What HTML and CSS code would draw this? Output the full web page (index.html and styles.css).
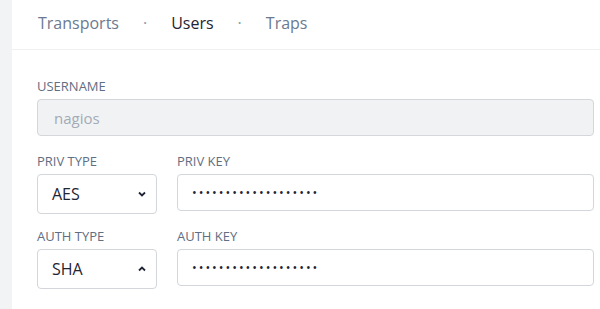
FILE: index.html
```html
<!DOCTYPE html>
<html lang="en">
<head>
    <meta charset="UTF-8">
    <meta name="viewport" content="width=device-width, initial-scale=1.0">
    <title>SNMP Users</title>
    <link rel="stylesheet" href="styles.css">
</head>
<body>
    <div class="layout">
        <div class="sidebar"></div>
        <div class="main">
            <nav class="tabs">
                <a class="tab">Transports</a>
                <span class="sep">·</span>
                <a class="tab active">Users</a>
                <span class="sep">·</span>
                <a class="tab">Traps</a>
            </nav>

            <form class="form">
                <div class="field username">
                    <label>Username</label>
                    <input type="text" class="input" value="nagios" disabled>
                </div>
                <div class="row">
                    <div class="field type">
                        <label>Priv Type</label>
                        <div class="select">
                            <span>AES</span>
                            <svg width="8" height="6" viewBox="0 0 8 6"><path d="M1 1.5 L4 4.5 L7 1.5" fill="none" stroke="#1f2533" stroke-width="1.8"/></svg>
                        </div>
                    </div>
                    <div class="field key">
                        <label>Priv Key</label>
                        <input type="password" class="input" value="secretsecretsecret1">
                    </div>
                </div>
                <div class="row">
                    <div class="field type">
                        <label>Auth Type</label>
                        <div class="select">
                            <span>SHA</span>
                            <svg width="8" height="6" viewBox="0 0 8 6"><path d="M1 4.5 L4 1.5 L7 4.5" fill="none" stroke="#1f2533" stroke-width="1.8"/></svg>
                        </div>
                    </div>
                    <div class="field key">
                        <label>Auth Key</label>
                        <input type="password" class="input" value="secretsecretsecret2">
                    </div>
                </div>
            </form>
        </div>
    </div>
</body>
</html>
```

FILE: styles.css
```css
    body {
        margin: 0;
        background: #ffffff;
        font-family: "Open Sans", "Liberation Sans", sans-serif;
        color: #1f2533;
    }
    .layout {
        display: flex;
        min-height: 309px;
    }
    .sidebar {
        width: 12px;
        background: #f2f3f5;
        flex-shrink: 0;
    }
    .main {
        flex: 1;
    }
    .tabs {
        display: flex;
        align-items: center;
        height: 46px;
        padding: 0 0 3px 26px;
        border-bottom: 1px solid #eef0f2;
        font-size: 16px;
        box-sizing: content-box;
    }
    .tab {
        color: #6b7a90;
    }
    .tab.active {
        color: #1f2533;
    }
    .sep {
        color: #8a97a8;
        margin: 0 24px;
    }
    .form {
        padding: 28px 6px 0 25px;
    }
    .field {
        display: flex;
        flex-direction: column;
    }
    .username {
        margin-bottom: 17px;
    }
    label {
        font-size: 13px;
        text-transform: uppercase;
        color: #5f6e82;
        line-height: 16px;
        margin-bottom: 5px;
    }
    .input {
        height: 37px;
        box-sizing: border-box;
        border: 1px solid #d3d6da;
        border-radius: 4px;
        padding: 0 16px;
        font-family: inherit;
        font-size: 15px;
        color: #1f2533;
        background: #ffffff;
        outline: none;
    }
    .input:disabled {
        background: #f1f2f4;
        color: #a3abb6;
    }
    .input[type="password"] {
        letter-spacing: 2px;
        font-size: 12.5px;
        padding-left: 14px;
    }
    .row {
        display: flex;
        gap: 20px;
        margin-top: 14px;
    }
    .type {
        width: 120px;
    }
    .key {
        flex: 1;
    }
    .select {
        height: 40px;
        box-sizing: border-box;
        border: 1px solid #d3d6da;
        border-radius: 4px;
        padding: 0 10px 0 14px;
        display: flex;
        align-items: center;
        justify-content: space-between;
        font-size: 16px;
    }
```
